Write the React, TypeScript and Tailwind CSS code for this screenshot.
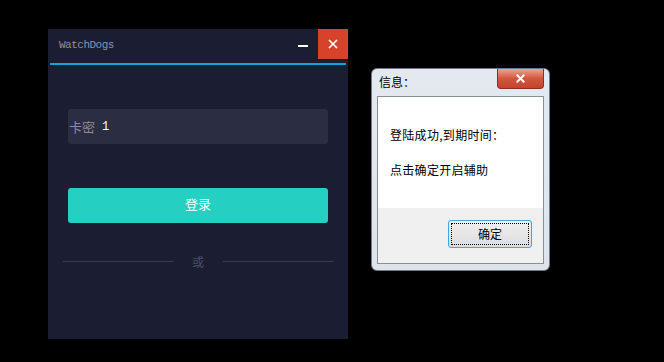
import { X } from 'lucide-react';

const cjk = "font-['Noto_Sans_CJK_SC','Noto_Sans',sans-serif]";

function LoginWindow() {
  return (
    <div className="flex h-[310px] w-[300px] shrink-0 flex-col bg-[#1b1e33]">
      <div className="flex h-[30px] items-center">
        <span className="flex-1 pl-[11px] pt-[3px] font-['Liberation_Mono',monospace] text-[11px] tracking-[-0.5px] text-[#8a90aa]">
          WatchDogs
        </span>
        <span className="mr-[10px] mt-[3px] h-[2px] w-[10px] bg-white" />
        <span className="flex h-[30px] w-[30px] items-center justify-center bg-[#d7432a]">
          <X className="h-[14px] w-[14px] text-white" strokeWidth={3} />
        </span>
      </div>
      <div className="mx-[2px] mt-[4px] h-[2px] bg-[#0aa7d0]" />
      <div className="mx-[20px] mt-[44px] flex h-[35px] items-center rounded-[3px] bg-[#2b2d42]">
        <span className={`${cjk} pl-[1px] text-[13px] text-[#8b8c96]`}>卡密</span>
        <span className="ml-[7px] font-['Liberation_Mono',monospace] text-[12px] text-white">1</span>
      </div>
      <div
        className={`${cjk} mx-[20px] mt-[44px] flex h-[35px] items-center justify-center rounded-[3px] bg-[#25d0c3] pb-[4px] text-[13px] leading-none text-white`}
      >
        登录
      </div>
      <div className="mx-[15px] mt-[28px] flex items-center">
        <span className="h-px w-[110px] bg-[#3a3d52]" />
        <span className={`${cjk} flex-1 pt-[2px] text-center text-[12px] text-[#4b4e62]`}>或</span>
        <span className="h-px w-[110px] bg-[#3a3d52]" />
      </div>
    </div>
  );
}

function MessageBox() {
  return (
    <div className="mt-[39px] flex h-[203px] w-[179px] shrink-0 flex-col rounded-[6px] border border-[#6f7a86] bg-gradient-to-b from-[#e4e9ef] to-[#dde4ea]">
      <div className="flex h-[27px] items-start">
        <span className={`${cjk} flex-1 pl-[7px] pt-[4px] text-[12px] text-black`}>信息：</span>
        <span className="mr-[5px] flex h-[20px] w-[47px] items-center justify-center rounded-b-[4px] border border-t-0 border-[#8e2e22] bg-gradient-to-b from-[#e8a493] via-[#d1573f] to-[#c2442d]">
          <X className="h-[13px] w-[13px] text-white" strokeWidth={3.5} />
        </span>
      </div>
      <div className="mx-[5px] flex h-[168px] flex-col border border-[#8a8f96]">
        <div className={`${cjk} flex h-[111px] flex-col bg-white pl-[12px] pt-[29px] text-[12px] tracking-[0.3px] text-black`}>
          <span className="leading-[18px]">登陆成功,到期时间：</span>
          <span className="mt-[17px] leading-[18px]">点击确定开启辅助</span>
        </div>
        <div className="flex flex-1 items-start justify-end bg-[#f0f0f0] pr-[11px] pt-[12px]">
          <span className="flex h-[28px] w-[84px] items-center justify-center rounded-[3px] border border-[#3ca7e0] bg-gradient-to-b from-[#f0f0f0] to-[#dcdcdc] p-[2px]">
            <span className={`${cjk} flex h-full w-full items-center justify-center border border-dotted border-black text-[12px] text-black`}>
              确定
            </span>
          </span>
        </div>
      </div>
    </div>
  );
}

export default function App() {
  return (
    <div className="flex h-[362px] w-[664px] items-start gap-[23px] bg-black pl-[48px] pt-[29px]">
      <LoginWindow />
      <MessageBox />
    </div>
  );
}
